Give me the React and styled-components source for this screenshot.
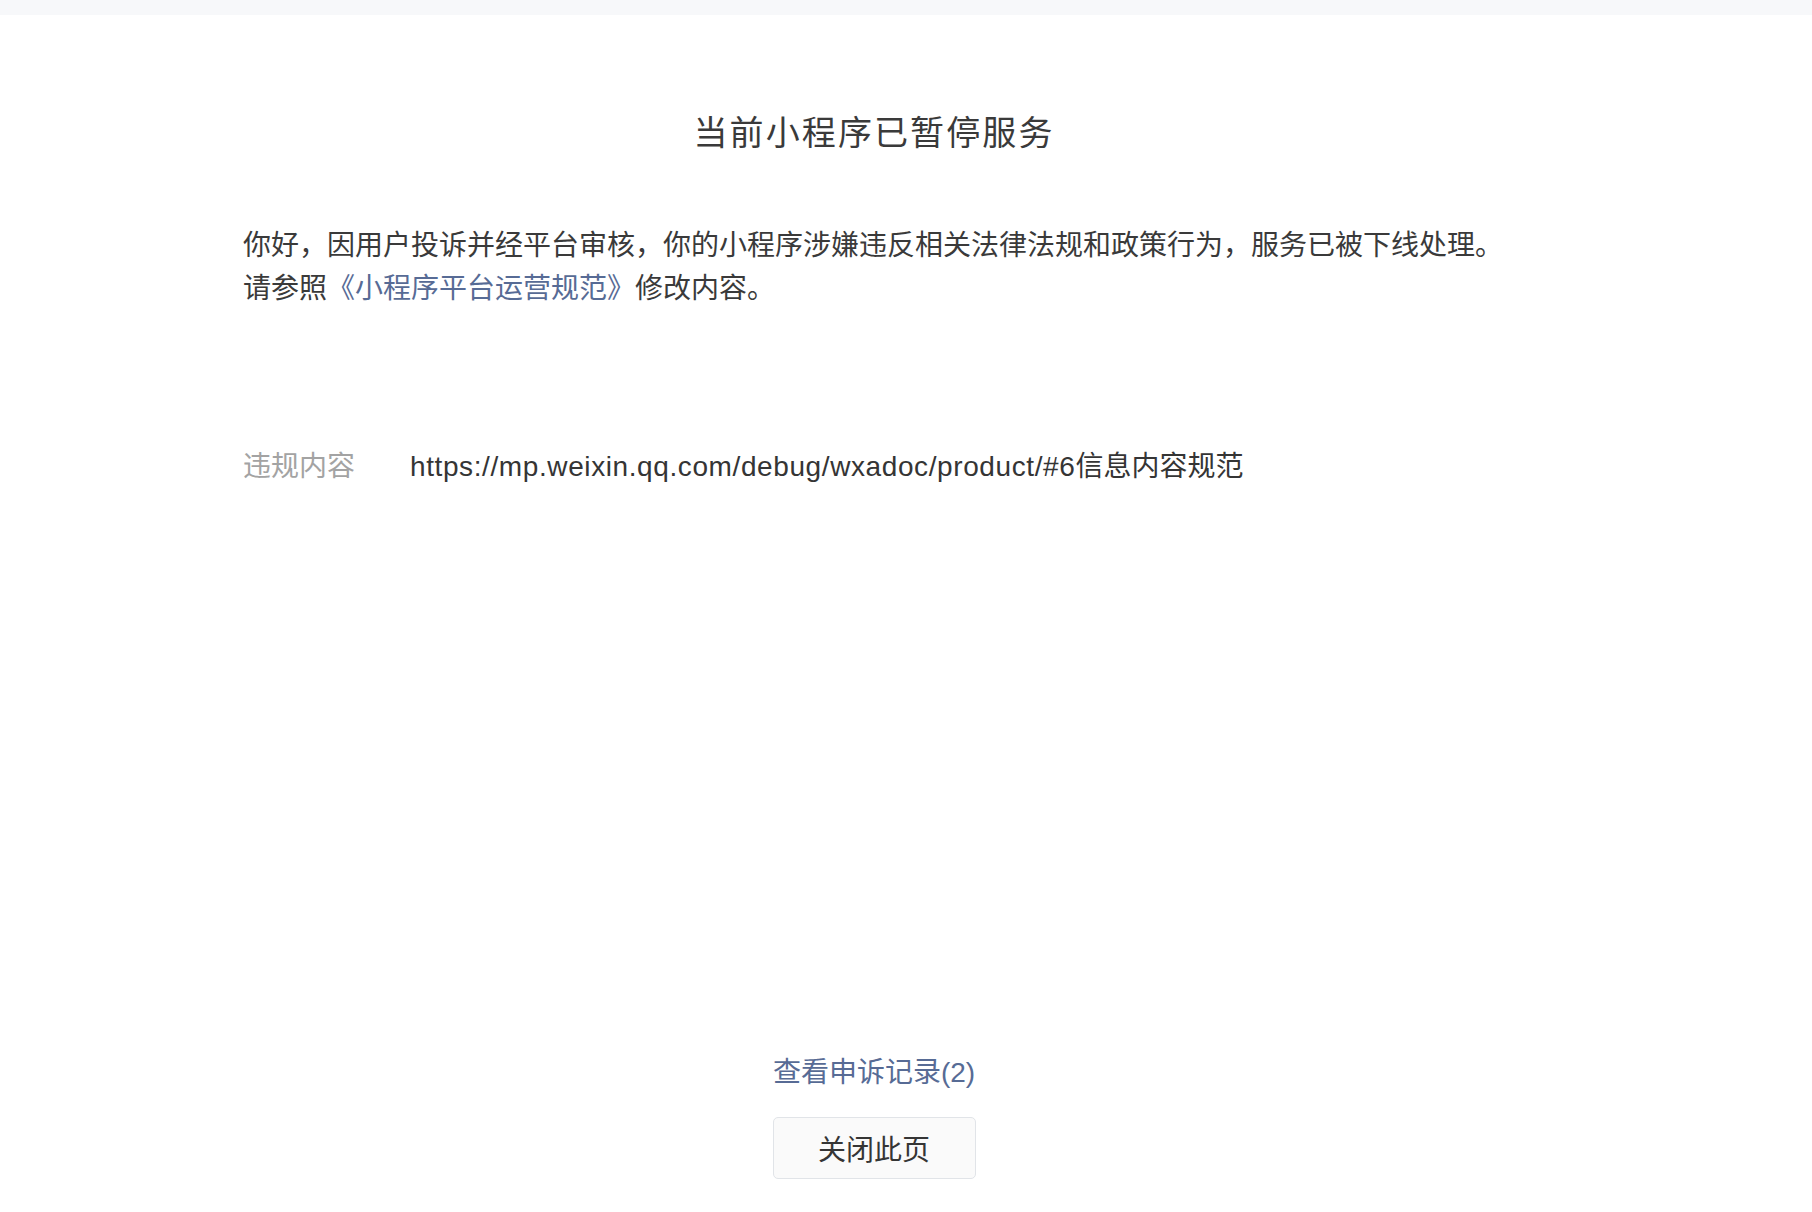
import React from "react";
import styled, { createGlobalStyle } from "styled-components";

const Global = createGlobalStyle`
  html, body { margin: 0; padding: 0; background: #ffffff; }
  body {
    font-family: "Noto Sans CJK SC", "Noto Sans", sans-serif;
    color: #353535;
    -webkit-font-smoothing: antialiased;
  }
`;

const Page = styled.div`
  min-height: 100vh;
  display: flex;
  flex-direction: column;
  box-sizing: border-box;
`;

const TopBar = styled.div`
  height: 15px;
  background: #f7f8fa;
  flex-shrink: 0;
`;

const Main = styled.main`
  flex: 1;
  display: flex;
  flex-direction: column;
  padding: 0 307px 33px 243px;
`;

const Title = styled.h1`
  margin: 92px 0 0;
  font-size: 34px;
  line-height: 48px;
  font-weight: 400;
  letter-spacing: 2.1px;
  text-align: center;
  color: #3a3a3a;
`;

const Desc = styled.p`
  margin: 67px 0 0;
  font-size: 28px;
  line-height: 43px;
  color: #3a3a3a;
`;

const Link = styled.a`
  color: #576b95;
  text-decoration: none;
  cursor: pointer;
`;

const InfoRow = styled.div`
  margin-top: 135px;
  display: flex;
  align-items: flex-start;
  font-size: 28px;
  line-height: 43px;
`;

const InfoLabel = styled.div`
  width: 167px;
  flex-shrink: 0;
  color: #a3a3a3;
`;

const InfoValue = styled.div`
  color: #353535;
  font-family: "Liberation Sans", "Noto Sans CJK SC", sans-serif;
  letter-spacing: 0.6px;
  & > span {
    font-family: "Noto Sans CJK SC", sans-serif;
    letter-spacing: 0;
  }
`;

const Footer = styled.footer`
  margin-top: auto;
  display: flex;
  flex-direction: column;
  align-items: center;
`;

const RecordLink = styled.a`
  font-family: "Liberation Sans", "Noto Sans CJK SC", sans-serif;
  font-size: 28px;
  line-height: 43px;
  padding-top: 2px;
  color: #576b95;
  text-decoration: none;
  cursor: pointer;
`;

const CloseButton = styled.button`
  margin-top: 23px;
  width: 203px;
  height: 62px;
  box-sizing: border-box;
  border: 1px solid #e1e4e8;
  border-radius: 5px;
  background: #fafafa;
  color: #353535;
  font-family: "Noto Sans CJK SC", sans-serif;
  font-size: 28px;
  line-height: 1;
  cursor: pointer;
  padding: 0;
`;

export default function App() {
  return (
    <>
      <Global />
      <Page>
        <TopBar />
        <Main>
          <Title>当前小程序已暂停服务</Title>
          <Desc>
            你好，因用户投诉并经平台审核，你的小程序涉嫌违反相关法律法规和政策行为，服务已被下线处理。
            <br />
            请参照<Link>《小程序平台运营规范》</Link>修改内容。
          </Desc>
          <InfoRow>
            <InfoLabel>违规内容</InfoLabel>
            <InfoValue>
              https://mp.weixin.qq.com/debug/wxadoc/product/#6<span>信息内容规范</span>
            </InfoValue>
          </InfoRow>
          <Footer>
            <RecordLink>查看申诉记录(2)</RecordLink>
            <CloseButton>关闭此页</CloseButton>
          </Footer>
        </Main>
      </Page>
    </>
  );
}
